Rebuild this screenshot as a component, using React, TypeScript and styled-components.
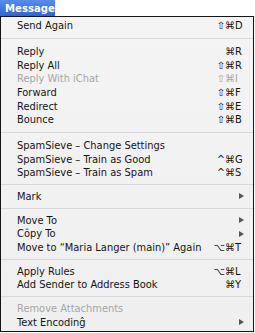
import React from "react";
import styled, { createGlobalStyle, css } from "styled-components";

const GlobalStyle = createGlobalStyle`
  html, body { margin: 0; padding: 0; background: #ffffff; }
  body { font-family: "DejaVu Sans", "Liberation Sans", sans-serif; }
`;

const Screen = styled.div`
  width: 255px;
  height: 333px;
  background: #ffffff;
  overflow: hidden;
`;

const TitleBar = styled.div`
  display: flex;
  height: 16px;
`;

const MenuTitle = styled.div`
  height: 16px;
  width: 55px;
  box-sizing: border-box;
  padding-left: 5px;
  display: flex;
  align-items: center;
  background: linear-gradient(#5b8ce6, #2f64d2);
  color: #ffffff;
  font-weight: bold;
  font-size: 10.1px;
`;

const Panel = styled.div`
  width: 254px;
  height: 316px;
  box-sizing: border-box;
  border: 1px solid #161616;
  background: linear-gradient(#f4f4f4, #efefef);
  padding: 2px 0 2px;
  display: flex;
  flex-direction: column;
`;

const Item = styled.div<{ $disabled?: boolean }>`
  height: 13.8px;
  display: flex;
  align-items: center;
  padding: 0 8px 0 16px;
  font-size: 9.9px;
  color: #141414;
  white-space: nowrap;
  ${(p) =>
    p.$disabled &&
    css`
      color: #a6a6a6;
    `}
`;

const Label = styled.span`
  flex: 1;
`;

const Mods = styled.span`
  text-align: right;
`;

const Key = styled.span`
  width: 10px;
  text-align: left;
`;

const Arrow = styled.span`
  width: 10px;
  display: flex;
  justify-content: flex-end;
  padding-right: 1px;
  box-sizing: border-box;
  &::after {
    content: "";
    border-left: 5px solid #555555;
    border-top: 3.5px solid transparent;
    border-bottom: 3.5px solid transparent;
  }
`;

const Separator = styled.div<{ $tall?: boolean }>`
  height: ${(p) => (p.$tall ? 12 : 10)}px;
  display: flex;
  align-items: center;
  &::after {
    content: "";
    flex: 1;
    height: 1px;
    background: #d9d9d9;
  }
`;

type Entry =
  | { sep: true; tall?: boolean }
  | { label: string; mods?: string; key?: string; disabled?: boolean; sub?: boolean };

const entries: Entry[] = [
  { label: "Send Again", mods: "⇧⌘", key: "D" },
  { sep: true, tall: true },
  { label: "Reply", mods: "⌘", key: "R" },
  { label: "Reply All", mods: "⇧⌘", key: "R" },
  { label: "Reply With iChat", mods: "⇧⌘", key: "I", disabled: true },
  { label: "Forward", mods: "⇧⌘", key: "F" },
  { label: "Redirect", mods: "⇧⌘", key: "E" },
  { label: "Bounce", mods: "⇧⌘", key: "B" },
  { sep: true, tall: true },
  { label: "SpamSieve – Change Settings" },
  { label: "SpamSieve – Train as Good", mods: "^⌘", key: "G" },
  { label: "SpamSieve – Train as Spam", mods: "^⌘", key: "S" },
  { sep: true },
  { label: "Mark", sub: true },
  { sep: true },
  { label: "Move To", sub: true },
  { label: "Côpy To", sub: true },
  { label: "Move to “Maria Langer (main)” Again", mods: "⌥⌘", key: "T" },
  { sep: true },
  { label: "Apply Rules", mods: "⌥⌘", key: "L" },
  { label: "Add Sender to Address Book", mods: "⌘", key: "Y" },
  { sep: true },
  { label: "Remove Attachments", disabled: true },
  { label: "Text Encodinĝ", sub: true },
];

export default function App() {
  return (
    <Screen>
      <GlobalStyle />
      <TitleBar>
        <MenuTitle>Message</MenuTitle>
      </TitleBar>
      <Panel>
        {entries.map((e, i) =>
          "sep" in e ? (
            <Separator key={i} $tall={e.tall} />
          ) : (
            <Item key={i} $disabled={e.disabled}>
              <Label>{e.label}</Label>
              {e.mods && <Mods>{e.mods}</Mods>}
              {e.key && <Key>{e.key}</Key>}
              {e.sub && <Arrow />}
            </Item>
          )
        )}
      </Panel>
    </Screen>
  );
}
